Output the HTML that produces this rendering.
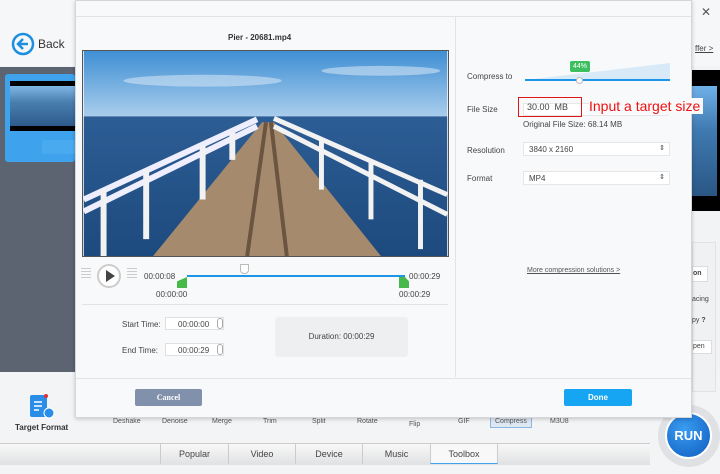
<!DOCTYPE html>
<html><head><style>
*{margin:0;padding:0;box-sizing:border-box}
body{width:720px;height:474px;overflow:hidden;position:relative;background:#f2f3f5;font-family:"Liberation Sans",sans-serif;font-size:8px;color:#444}
.a{position:absolute}
</style></head><body>
<div class="a" style="left:0;top:0;width:720px;height:66px;background:#f6f7f8"></div>
<div class="a" style="left:0;top:67px;width:75px;height:305px;background:#5c6371"></div>
<div class="a" style="left:5px;top:74px;width:70px;height:88px;background:#3ea2ec;border-radius:3px"></div>
<div class="a" style="left:10px;top:81px;width:65px;height:50px;background:#000"></div>
<div class="a" style="left:10px;top:86px;width:65px;height:40px;background:linear-gradient(#7fb7e6,#4a7fb0 40%,#2d5a8c)"></div>
<div class="a" style="left:42px;top:140px;width:33px;height:14px;background:#4aaaf0;border-radius:2px"></div>
<svg class="a" style="left:11px;top:32px" width="24" height="24"><circle cx="12" cy="12" r="10" fill="none" stroke="#1e8fe0" stroke-width="2.5"/><path d="M17 12H8M12 7l-5 5 5 5" fill="none" stroke="#1e8fe0" stroke-width="2.5"/></svg>
<div class="a" style="left:38px;top:37px;font-size:12px;color:#333">Back</div>
<div class="a" style="left:0;top:372px;width:720px;height:102px;background:#f3f4f5"></div>
<svg class="a" style="left:28px;top:393px" width="30" height="28"><rect x="2" y="2" width="17" height="22" rx="2" fill="#2a8ee8"/><path d="M6 9h8M6 13h8M6 17h5" stroke="#fff" stroke-width="1.5"/><circle cx="21" cy="20" r="5" fill="#2a8ee8" stroke="#fff"/><circle cx="18" cy="3" r="2" fill="#e03030"/></svg>
<div class="a" style="left:15px;top:423px;font-size:8px;font-weight:bold;color:#333">Target Format</div>
<div class="a" style="left:0;top:418px;width:720px;font-size:7px;color:#555">
<span class="a" style="left:113px">Deshake</span><span class="a" style="left:162px">Denoise</span><span class="a" style="left:212px">Merge</span><span class="a" style="left:263px">Trim</span><span class="a" style="left:312px">Split</span><span class="a" style="left:357px">Rotate</span><span class="a" style="left:409px;top:3px">Flip</span><span class="a" style="left:458px">GIF</span><span class="a" style="left:490px;top:-3px;border:1px solid #8ab8e0;background:#dde8f2;padding:2px 4px">Compress</span><span class="a" style="left:550px">M3U8</span></div>
<div class="a" style="left:0;top:443px;width:650px;height:22px;background:linear-gradient(#f8f8f8,#e0e1e3);border-top:1px solid #ccc"></div>
<div class="a" style="left:160px;top:444px;font-size:9px;color:#444">
<span class="a" style="left:0;width:68px;height:20px;border-left:1px solid #ccc;text-align:center;line-height:20px">Popular</span>
<span class="a" style="left:68px;width:67px;height:20px;border-left:1px solid #ccc;text-align:center;line-height:20px">Video</span>
<span class="a" style="left:135px;width:67px;height:20px;border-left:1px solid #ccc;text-align:center;line-height:20px">Device</span>
<span class="a" style="left:202px;width:68px;height:20px;border-left:1px solid #ccc;text-align:center;line-height:20px">Music</span>
<span class="a" style="left:270px;width:68px;height:20px;border-left:1px solid #ccc;border-right:1px solid #ccc;background:#f8f8f8;border-bottom:1px solid #3ea2ec;text-align:center;line-height:20px">Toolbox</span></div>
<div class="a" style="left:658px;top:405px;width:62px;height:62px;border-radius:50%;background:#dfe1e4"></div>
<div class="a" style="left:665px;top:412px;width:47px;height:47px;border-radius:50%;background:radial-gradient(circle at 40% 35%,#3b9df0,#0d5cc0);border:2px solid #fff;color:#fff;font-weight:bold;font-size:13px;text-align:center;line-height:43px">RUN</div>
<div class="a" style="left:692px;top:70px;width:28px;height:141px;background:#000"></div>
<div class="a" style="left:692px;top:86px;width:25px;height:110px;background:linear-gradient(#6fb0e8,#3f7ab0 40%,#2a5685)"></div>
<div class="a" style="left:695px;top:44px;font-size:8px;text-decoration:underline;color:#444">ffer &gt;</div>
<div class="a" style="left:692px;top:242px;width:24px;height:150px;background:#f0f1f3;border:1px solid #e2e2e2"></div>
<div class="a" style="left:692px;top:266px;width:16px;height:16px;background:#fff;border:1px solid #ddd;font-size:7px;font-weight:bold;line-height:14px">on</div>
<div class="a" style="left:692px;top:296px;font-size:7px">acing</div>
<div class="a" style="left:692px;top:317px;font-size:7px">py <b>?</b></div>
<div class="a" style="left:692px;top:340px;width:20px;height:14px;background:#fff;border:1px solid #ddd;font-size:7px;line-height:12px">pen</div>
<div class="a" style="left:701px;top:5px;font-size:12px;color:#555">✕</div>
<div class="a" style="left:75px;top:0;width:617px;height:418px;background:#f8f9fa;border:1px solid #d4d6d9;box-shadow:0 1px 4px rgba(0,0,0,.2)">
 <div class="a" style="left:0;top:15px;width:615px;height:1px;background:#e2e3e5"></div>
 <div class="a" style="left:0;top:377px;width:615px;height:1px;background:#e2e3e5"></div>
</div>
<div class="a" style="left:455px;top:16px;width:1px;height:361px;background:#e2e3e5"></div>
<div class="a" style="left:228px;top:33px;font-size:8px;font-weight:bold;color:#333">Pier - 20681.mp4</div>
<svg class="a" style="left:82px;top:50px;border:1px solid #555" width="367" height="207" viewBox="0 0 367 207">
<defs><linearGradient id="s" x1="0" y1="0" x2="0" y2="1"><stop offset="0" stop-color="#3f8fd4"/><stop offset="1" stop-color="#a9cdec"/></linearGradient>
<linearGradient id="w" x1="0" y1="0" x2="0" y2="1"><stop offset="0" stop-color="#2c5d94"/><stop offset="1" stop-color="#1d4a7e"/></linearGradient></defs>
<rect width="367" height="66" fill="url(#s)"/>
<ellipse cx="120" cy="30" rx="80" ry="6" fill="#cfe2f3" opacity=".6"/><ellipse cx="300" cy="20" rx="60" ry="5" fill="#cfe2f3" opacity=".6"/>
<rect y="66" width="367" height="141" fill="url(#w)"/>
<polygon points="180,72 192,72 300,207 70,207" fill="#a58a6d"/>
<path d="M184 72L165 207M189 72L205 207" stroke="#6b5440" stroke-width="4"/>
<path d="M0 150L175 69M0 162L175 76" stroke="#eef" stroke-width="6"/>
<path d="M20 140V207M63 120V190M120 95V150M150 82V110" stroke="#f2f2f2" stroke-width="6"/>
<path d="M192 68L367 145M192 76L367 165" stroke="#f2f2f2" stroke-width="5"/>
<path d="M240 88V140M290 110V170M340 130V200" stroke="#f2f2f2" stroke-width="5"/>
</svg>
<div class="a" style="left:81px;top:268px;width:10px;height:10px;background:repeating-linear-gradient(#ccc 0 1px,transparent 1px 3px)"></div>
<div class="a" style="left:97px;top:264px;width:24px;height:24px;border-radius:50%;border:2px solid #ccc;background:#fff"></div>
<div class="a" style="left:106px;top:270px;width:0;height:0;border-left:9px solid #444;border-top:6px solid transparent;border-bottom:6px solid transparent"></div>
<div class="a" style="left:127px;top:268px;width:10px;height:10px;background:repeating-linear-gradient(#ccc 0 1px,transparent 1px 3px)"></div>
<div class="a" style="left:144px;top:272px;font-size:8px">00:00:08</div>
<div class="a" style="left:187px;top:275px;width:218px;height:2px;background:#1e96e8"></div>
<div class="a" style="left:240px;top:264px;width:9px;height:10px;border:1px solid #bbb;border-radius:0 0 4px 4px;background:#fff"></div>
<div class="a" style="left:177px;top:277px;width:10px;height:11px;background:#47b84a;clip-path:polygon(100% 0,100% 100%,0 100%,0 40%)"></div>
<div class="a" style="left:399px;top:277px;width:10px;height:11px;background:#47b84a;clip-path:polygon(0 0,60% 0,100% 40%,100% 100%,0 100%)"></div>
<div class="a" style="left:156px;top:290px;font-size:8px">00:00:00</div>
<div class="a" style="left:409px;top:272px;font-size:8px">00:00:29</div>
<div class="a" style="left:399px;top:290px;font-size:8px">00:00:29</div>
<div class="a" style="left:82px;top:304px;width:366px;height:1px;background:#e2e3e5"></div>
<div class="a" style="left:122px;top:320px;font-size:8px">Start Time:</div>
<div class="a" style="left:122px;top:346px;font-size:8px">End Time:</div>
<div class="a" style="left:165px;top:317px;width:59px;height:13px;background:#fff;border:1px solid #e0e0e0;font-size:8px;padding:2px 0 0 12px">00:00:00</div>
<div class="a" style="left:165px;top:343px;width:59px;height:13px;background:#fff;border:1px solid #e0e0e0;font-size:8px;padding:2px 0 0 12px">00:00:29</div>
<div class="a" style="left:217px;top:318px;width:6px;height:11px;border:1px solid #aaa;border-radius:3px"></div>
<div class="a" style="left:217px;top:344px;width:6px;height:11px;border:1px solid #aaa;border-radius:3px"></div>
<div class="a" style="left:275px;top:317px;width:133px;height:40px;background:#eeeff0;border-radius:3px;font-size:8px;text-align:center;line-height:40px">Duration: 00:00:29</div>
<div class="a" style="left:135px;top:389px;width:67px;height:17px;background:#8190ab;border-radius:2px;color:#fff;font-weight:bold;font-size:8px;text-align:center;line-height:17px;font-family:'Liberation Serif',serif">Cancel</div>
<div class="a" style="left:564px;top:389px;width:68px;height:17px;background:#16a5f2;border-radius:2px;color:#fff;font-weight:bold;font-size:8px;text-align:center;line-height:17px">Done</div>
<div class="a" style="left:467px;top:72px;font-size:8px">Compress to</div>
<div class="a" style="left:525px;top:63px;width:145px;height:17px;background:#d8eaf8;clip-path:polygon(0 100%,100% 0,100% 100%)"></div>
<div class="a" style="left:525px;top:79px;width:145px;height:2px;background:#1e96e8"></div>
<div class="a" style="left:576px;top:77px;width:7px;height:7px;border-radius:50%;background:#fff;border:1px solid #bbb"></div>
<div class="a" style="left:570px;top:61px;width:20px;height:11px;background:#3bbf5f;border-radius:2px;color:#fff;font-size:7px;text-align:center;line-height:11px">44%</div>
<div class="a" style="left:467px;top:105px;font-size:8px">File Size</div>
<div class="a" style="left:523px;top:103px;width:145px;height:13px;background:#fff;border:1px solid #e6e6e6"></div>
<div class="a" style="left:518px;top:97px;width:64px;height:20px;border:1.5px solid #e01515;font-size:9px;padding:4px 0 0 8px">30.00&nbsp; MB</div>
<div class="a" style="left:589px;top:98px;font-size:14px;color:#f01010;background:#f8f9fa;padding-right:3px">Input a target size</div>
<div class="a" style="left:523px;top:120px;font-size:8px">Original File Size: 68.14 MB</div>
<div class="a" style="left:467px;top:146px;font-size:8px">Resolution</div>
<div class="a" style="left:467px;top:174px;font-size:8px">Format</div>
<div class="a" style="left:523px;top:142px;width:147px;height:14px;background:#fff;border:1px solid #e6e6e6;font-size:8px;padding:2px 0 0 5px">3840 x 2160<span class="a" style="right:4px;top:1px;font-size:7px">⇕</span></div>
<div class="a" style="left:523px;top:171px;width:147px;height:14px;background:#fff;border:1px solid #e6e6e6;font-size:8px;padding:2px 0 0 5px">MP4<span class="a" style="right:4px;top:1px;font-size:7px">⇕</span></div>
<div class="a" style="left:527px;top:267px;font-size:7px;text-decoration:underline;color:#555">More compression solutions &gt;</div>
</body></html>
